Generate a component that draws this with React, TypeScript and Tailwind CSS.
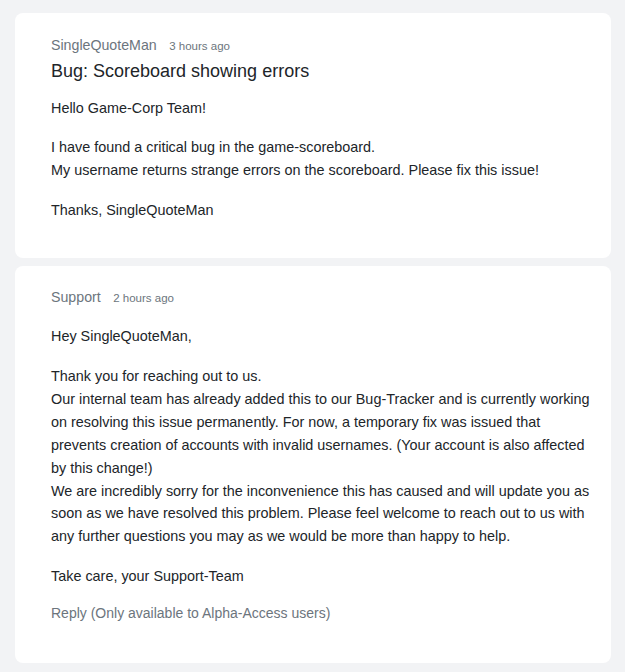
export default function App() {
  return (
    <div
      className="min-h-[672px] bg-[#f2f3f5] pt-[13px] pl-[15px] pr-[14px] pb-2 flex flex-col gap-2 text-[14.4px] leading-[22.86px] text-[#212529]"
      style={{ fontFamily: '"Liberation Sans", Arial, sans-serif' }}
    >
      {/* Original post */}
      <div className="bg-white rounded-lg pl-9 pr-5 pt-[22px] pb-[36.5px]">
        <div className="flex items-baseline leading-5">
          <span className="text-[14.2px] text-[#6c757d]">SingleQuoteMan</span>
          <span className="ml-[12.5px] text-[11.52px] text-[#6c757d]">3 hours ago</span>
        </div>
        <h1 className="mt-[1px] text-[18px] leading-7 text-[#212529]">Bug: Scoreboard showing errors</h1>
        <div className="mt-[12px] flex flex-col gap-[16.5px]">
          <p>Hello Game-Corp Team!</p>
          <p>
            I have found a critical bug in the game-scoreboard.
            <br />
            My username returns strange errors on the scoreboard. Please fix this issue!
          </p>
          <p>Thanks, SingleQuoteMan</p>
        </div>
      </div>

      {/* Support reply */}
      <div className="bg-white rounded-lg pl-9 pr-5 pt-[21px] pb-[38px]">
        <div className="flex items-baseline leading-5">
          <span className="text-[14.2px] text-[#6c757d]">Support</span>
          <span className="ml-[12.5px] text-[11.52px] text-[#6c757d]">2 hours ago</span>
        </div>
        <div className="mt-[17.5px] flex flex-col gap-[17px]">
          <p>Hey SingleQuoteMan,</p>
          <p>
            Thank you for reaching out to us.
            <br />
            Our internal team has already added this to our Bug-Tracker and is currently working on resolving this issue permanently. For now, a temporary fix was issued that prevents creation of accounts with invalid usernames. (Your account is also affected by this change!)
            <br />
            We are incredibly sorry for the inconvenience this has caused and will update you as soon as we have resolved this problem. Please feel welcome to reach out to us with any further questions you may as we would be more than happy to help.
          </p>
          <p>Take care, your Support-Team</p>
        </div>
        <div className="mt-[14px] text-[14px] text-[#6c757d]">Reply (Only available to Alpha-Access users)</div>
      </div>
    </div>
  );
}
